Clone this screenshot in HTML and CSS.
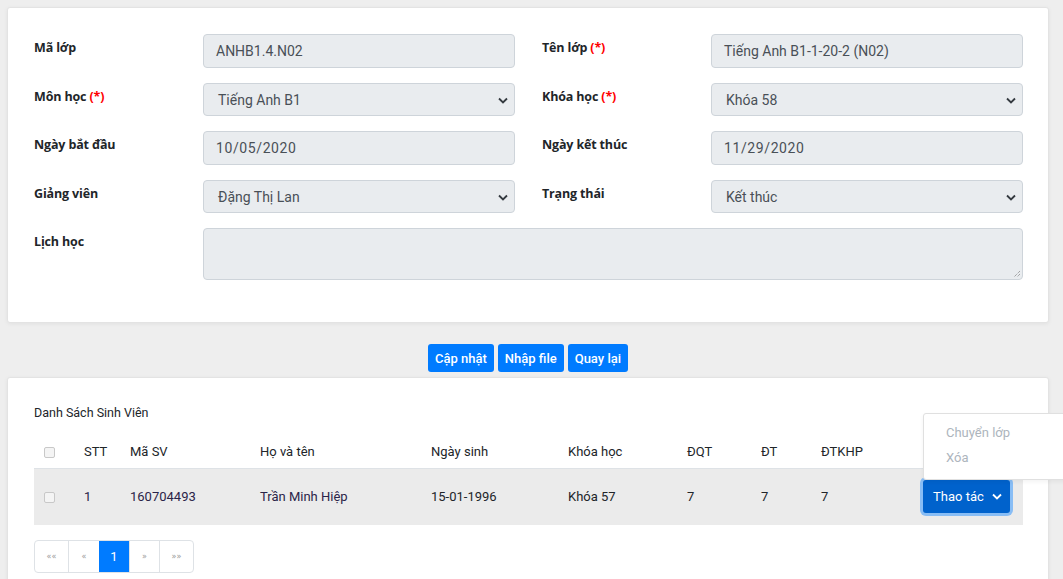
FILE: index.html
```html
<!DOCTYPE html>
<html lang="vi">
<head>
<meta charset="utf-8">
<link rel="stylesheet" href="styles.css">
</head>
<body>
<div class="page">
  <section class="card form-card">
    <div class="form-grid">
      <label class="lbl">Mã lớp</label>
      <div class="ctrl">ANHB1.4.N02</div>
      <label class="lbl">Tên lớp <span class="req">(*)</span></label>
      <div class="ctrl">Tiếng Anh B1-1-20-2 (N02)</div>

      <label class="lbl">Môn học <span class="req">(*)</span></label>
      <div class="ctrl sel">Tiếng Anh B1<svg class="chev" viewBox="0 0 10 6"><path d="M1 1l4 4 4-4" fill="none" stroke="#343a40" stroke-width="1.8"/></svg></div>
      <label class="lbl">Khóa học <span class="req">(*)</span></label>
      <div class="ctrl sel">Khóa 58<svg class="chev" viewBox="0 0 10 6"><path d="M1 1l4 4 4-4" fill="none" stroke="#343a40" stroke-width="1.8"/></svg></div>

      <label class="lbl">Ngày bắt đầu</label>
      <div class="ctrl date">10/05/2020</div>
      <label class="lbl">Ngày kết thúc</label>
      <div class="ctrl date">11/29/2020</div>

      <label class="lbl">Giảng viên</label>
      <div class="ctrl sel">Đặng Thị Lan<svg class="chev" viewBox="0 0 10 6"><path d="M1 1l4 4 4-4" fill="none" stroke="#343a40" stroke-width="1.8"/></svg></div>
      <label class="lbl">Trạng thái</label>
      <div class="ctrl sel">Kết thúc<svg class="chev" viewBox="0 0 10 6"><path d="M1 1l4 4 4-4" fill="none" stroke="#343a40" stroke-width="1.8"/></svg></div>

      <label class="lbl">Lịch học</label>
      <div class="ctrl area"><svg class="grip" viewBox="0 0 8 8"><path d="M7 1L1 7M7 4L4 7" stroke="#666" stroke-width="0.8" stroke-dasharray="1 1"/></svg></div>
    </div>
  </section>

  <div class="actions">
    <button class="btn">Cập nhật</button>
    <button class="btn">Nhập file</button>
    <button class="btn">Quay lại</button>
  </div>

  <section class="card list-card">
    <div class="title">Danh Sách Sinh Viên</div>
    <table class="tbl">
      <colgroup>
        <col style="width:40px"><col style="width:46px"><col style="width:130px"><col style="width:171px"><col style="width:137px"><col style="width:119px"><col style="width:74px"><col style="width:60px"><col style="width:101px"><col style="width:111px">
      </colgroup>
      <thead>
        <tr>
          <th><span class="cb"></span></th>
          <th>STT</th><th>Mã SV</th><th>Họ và tên</th><th>Ngày sinh</th><th>Khóa học</th><th>ĐQT</th><th>ĐT</th><th>ĐTKHP</th><th></th>
        </tr>
      </thead>
      <tbody>
        <tr>
          <td><span class="cb"></span></td>
          <td class="lnk">1</td><td class="lnk">160704493</td><td class="lnk">Trần Minh Hiệp</td><td>15-01-1996</td><td>Khóa 57</td><td>7</td><td>7</td><td>7</td>
          <td><button class="act">Thao tác <svg class="chev-w" viewBox="0 0 10 6"><path d="M1 1l4 4 4-4" fill="none" stroke="#fff" stroke-width="1.8"/></svg></button></td>
        </tr>
      </tbody>
    </table>
    <nav class="pager">
      <span class="pg">««</span>
      <span class="pg">«</span>
      <span class="pg on">1</span>
      <span class="pg">»</span>
      <span class="pg">»»</span>
    </nav>
  </section>
</div>
<div class="menu">
  <div class="mi">Chuyển lớp</div>
  <div class="mi">Xóa</div>
</div>
</body>
</html>
```
FILE: styles.css
```css
* { box-sizing: border-box; }
html, body { margin: 0; padding: 0; }
body {
  background: #eeeeee;
  font-family: Roboto, "Liberation Sans", sans-serif;
  color: #212529;
  width: 1063px;
  height: 579px;
  overflow: hidden;
  position: relative;
}
.page { padding: 7px 14px 0 7px; }
.card {
  background: #fff;
  border: 1px solid #e3e3e3;
  border-radius: 3px;
  box-shadow: 0 1px 4px rgba(0,0,0,0.06);
}
.form-card { padding: 26px 26px 26px 26px; height: 316px; }
.form-grid {
  display: grid;
  grid-template-columns: 169px 312px 196px 312px;
  row-gap: 15px;
}
.form-grid .lbl:nth-child(4n+3) { margin-left: 27px; }
.lbl {
  font-family: "Open Sans", "Liberation Sans", sans-serif;
  font-weight: 700;
  font-size: 12.5px;
  padding-top: 5px;
  color: #212529;
  letter-spacing: -0.15px;
}
.req { color: #ff0000; font-weight: 700; }
.ctrl {
  height: 33.5px;
  background: #e9ecef;
  border: 1px solid #ced4da;
  border-radius: 4px;
  font-size: 14px;
  color: #495057;
  padding: 7px 12px;
  line-height: 18px;
  position: relative;
}
.ctrl.sel { padding-left: 14px; }
.ctrl.date { letter-spacing: 0.6px; }
.chev { position: absolute; right: 6px; top: 13px; width: 10px; height: 7px; }
.ctrl.area { grid-column: 2 / 5; height: 52px; }
.grip { position: absolute; right: 1px; bottom: 1px; width: 8px; height: 8px; }
.actions {
  display: flex;
  justify-content: center;
  gap: 4px;
  padding: 21px 0 5px;
}
.btn {
  background: #007bff;
  color: #fff;
  border: 0;
  border-radius: 3px;
  height: 28px;
  padding: 0 7px;
  font-family: Roboto, "Liberation Sans", sans-serif;
  font-weight: 500;
  font-size: 13px;
}
.list-card { padding: 27px 26px 20px; height: 215px; }
.title { font-size: 12.5px; color: #212529; margin-bottom: 15px; }
.tbl { border-collapse: collapse; table-layout: fixed; width: 989px; font-size: 13px; }
.tbl th {
  text-align: left;
  font-weight: 400;
  padding: 0 10px;
  height: 33px;
  border-bottom: 1px solid #dee2e6;
}
.tbl td { padding: 0 10px; height: 57px; background: #ebebeb; }
.tbl td.lnk { color: #2a2448; }
.cb {
  display: inline-block;
  width: 11px; height: 11px;
  border: 1px solid #c8c8c8;
  border-radius: 2px;
  background: #f4f4f4;
  vertical-align: middle;
}
.act {
  background: #0062cc;
  color: #fff;
  border: 0;
  border-radius: 3px;
  height: 33px;
  width: 87px;
  font-family: Roboto, "Liberation Sans", sans-serif;
  font-size: 13px;
  padding: 0 0 0 2px;
  box-shadow: 0 0 0 3px rgba(38,143,255,0.5);
  display: flex;
  align-items: center;
  justify-content: center;
  gap: 8px;
  margin-left: 1px;
}
.chev-w { width: 10px; height: 7px; }
.pager {
  display: inline-flex;
  margin-top: 15px;
  border: 1px solid #dee2e6;
  border-radius: 4px;
  overflow: hidden;
}
.pg {
  height: 31px;
  display: flex;
  align-items: center;
  justify-content: center;
  font-family: "DejaVu Sans", sans-serif;
  font-size: 8px;
  color: #999;
  border-left: 1px solid #dee2e6;
}
.pg:first-child { border-left: 0; width: 33px; }
.pg:nth-child(2) { width: 31px; }
.pg:nth-child(3) { width: 30px; }
.pg:nth-child(4) { width: 30px; }
.pg:nth-child(5) { width: 34px; }
.pg.on { background: #007bff; color: #fff; font-family: Roboto, sans-serif; font-size: 13px; border-left: 0; }
.menu {
  position: absolute;
  left: 923px;
  top: 413px;
  width: 160px;
  height: 67px;
  background: #fff;
  border: 1px solid #e0e0e0;
  border-radius: 3px;
  padding: 11px 0 0 22px;
  box-shadow: 0 2px 4px rgba(0,0,0,0.05);
}
.mi { font-size: 13px; color: #adb5bd; height: 25px; }
```
